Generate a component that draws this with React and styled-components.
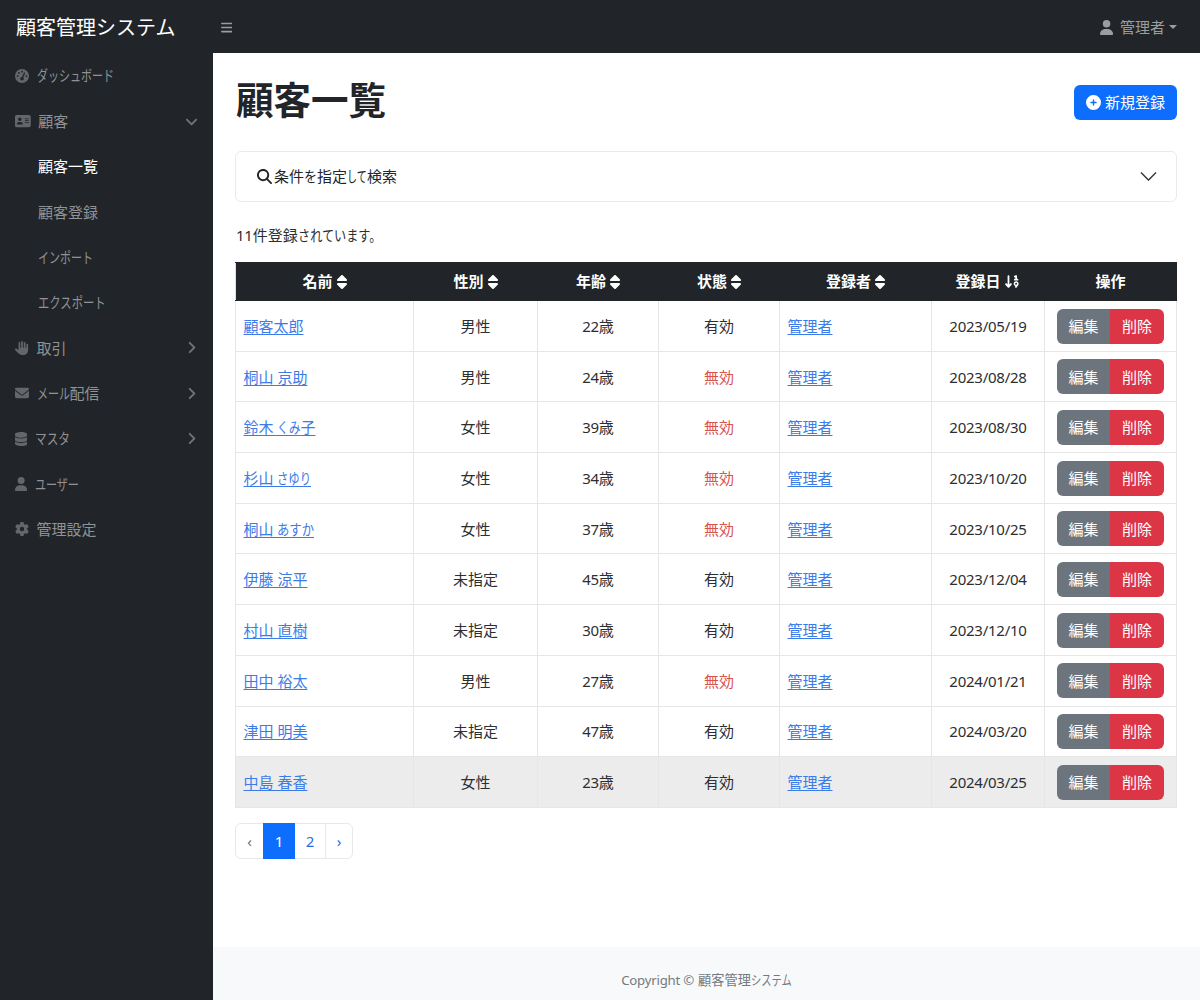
import React from "react";
import styled, { createGlobalStyle } from "styled-components";
import {
  FaAddressCard,
  FaAngleDown,
  FaArrowDown19,
  FaBars,
  FaCirclePlus,
  FaDatabase,
  FaEnvelope,
  FaGaugeHigh,
  FaGear,
  FaHand,
  FaMagnifyingGlass,
  FaSort,
  FaUser,
} from "react-icons/fa6";

const GlobalStyle = createGlobalStyle`
  * {
    box-sizing: border-box;
  }
  body {
    margin: 0;
    color: #2b2f33;
    background-color: #fff;
    font-family: "Noto Sans", "Noto Sans CJK JP", sans-serif;
    font-size: 15px;
    line-height: 1.5;
  }
  svg {
    display: block;
    flex: none;
  }
`;

// ratio is the glyph's own width / height
const IconBox = styled.span`
  flex: none;

  svg {
    height: ${(props) => props.$size}px;
    width: ${(props) => props.$size * props.$ratio}px;
  }
`;

const Page = styled.div`
  width: 1200px;
  height: 1000px;
  display: flex;
  flex-direction: column;
  overflow: hidden;
`;

const TopNav = styled.header`
  height: 53px;
  flex: none;
  display: flex;
  align-items: center;
  padding-top: 1px;
  background-color: #212529;
  color: #9b9d9f;
`;

const Brand = styled.div`
  width: 221px;
  padding: 1px 0 0 16px;
  font-size: 20px;
  line-height: 30px;
  color: #fff;
  white-space: nowrap;
`;

const UserMenu = styled.div`
  margin-left: auto;
  padding-right: 23px;
  display: flex;
  align-items: center;
`;

const UserName = styled.span`
  margin: 0 4px 0 7px;
`;

const Caret = styled.span`
  border: 4.5px solid transparent;
  border-top-color: currentColor;
  border-bottom: 0;
`;

const Body = styled.div`
  flex: 1;
  display: flex;
  min-height: 0;
`;

const SideNav = styled.nav`
  width: 213px;
  flex: none;
  background-color: #212529;
`;

const NavLink = styled.div`
  height: 45.38px;
  display: flex;
  align-items: center;
  padding: 0 15px 0 ${(props) => (props.$nested ? 38 : 15)}px;
  color: ${(props) => (props.$active ? "#fff" : "#909294")};
  white-space: nowrap;
`;

const NavIcon = styled.span`
  margin-right: 7.5px;
  color: #64676a;
`;

const NavArrow = styled.span`
  margin-left: auto;
  color: #707376;
  transform: ${(props) => (props.$collapsed ? "rotate(-90deg)" : "none")};
`;

const Content = styled.div`
  flex: 1;
  display: flex;
  flex-direction: column;
`;

const Main = styled.main`
  flex: 1;
  padding: 24px 23px 0 22px;
`;

const TitleRow = styled.div`
  height: 74px;
  display: flex;
  justify-content: space-between;
  align-items: flex-start;
`;

const Title = styled.h1`
  margin: 0 0 0 1px;
  font-size: 37.5px;
  line-height: 46px;
  font-weight: 600;
  color: #212529;
`;

const NewButton = styled.button`
  width: 103px;
  height: 35px;
  margin-top: 8px;
  padding: 0;
  display: flex;
  align-items: center;
  justify-content: center;
  gap: 4px;
  border: 0;
  border-radius: 6px;
  background-color: #0d6efd;
  color: #fff;
  font: inherit;
`;

const SearchPanel = styled.div`
  height: 51px;
  margin-bottom: 22px;
  padding: 0 18px 0 21px;
  display: flex;
  align-items: center;
  border: 1px solid #e9ebed;
  border-radius: 6px;
  color: #212529;
`;

const SearchLabel = styled.span`
  flex: 1;
  margin-left: 2px;
`;

const Summary = styled.p`
  margin: 0 0 15px 1px;
  height: 23px;
  line-height: 23px;
`;

const Table = styled.table`
  width: 942px;
  table-layout: fixed;
  border-collapse: collapse;
`;

const Th = styled.th`
  width: ${(props) => props.$width}px;
  height: 38px;
  padding: 0;
  background-color: #212529;
  color: #fff;
  font-weight: 700;
  border: 1px solid #212529;
  border-left-color: #dee2e6;
`;

const ThInner = styled.div`
  display: flex;
  align-items: center;
  justify-content: center;
  gap: 4px;
`;

const Tr = styled.tr`
  height: 50.7px;
  background-color: ${(props) => (props.$hover ? "#ececec" : "transparent")};
`;

const Td = styled.td`
  padding: 0.5px 7.5px 0;
  border: 1px solid #e4e6e8;
  text-align: ${(props) => props.$align || "center"};
  color: ${(props) => (props.$danger ? "#d9534f" : "inherit")};
  white-space: nowrap;
`;

const DateText = styled.span`
  letter-spacing: -0.25px;
`;

const Link = styled.a`
  color: #3c7be8;
  text-decoration: underline;
  text-underline-offset: 2px;
`;

const ButtonGroup = styled.div`
  display: flex;
  justify-content: center;
`;

const GroupButton = styled.button`
  width: ${(props) => (props.$danger ? 54 : 53)}px;
  height: 35px;
  padding: 0;
  border: 0;
  border-radius: ${(props) => (props.$danger ? "0 6px 6px 0" : "6px 0 0 6px")};
  background-color: ${(props) => (props.$danger ? "#dc3545" : "#6c757d")};
  color: #fff;
  font: inherit;
`;

const Pagination = styled.div`
  width: 118px;
  height: 36px;
  margin-top: 15px;
  display: flex;
  border: 1px solid #e6e8ea;
  border-radius: 6px;
`;

const PageItem = styled.span`
  width: ${(props) => props.$width}px;
  display: flex;
  align-items: center;
  justify-content: center;
  padding-top: 1px;
  margin: ${(props) => (props.$active ? "-1px 0" : 0)};
  background-color: ${(props) => (props.$active ? "#0d6efd" : "transparent")};
  border-right: ${(props) => (props.$divider ? "1px solid #e6e8ea" : 0)};
  color: ${(props) => (props.$active ? "#fff" : props.$muted ? "#6c757d" : "#2170e8")};
`;

const Footer = styled.footer`
  height: 53px;
  padding-top: 15px;
  display: flex;
  justify-content: center;
  align-items: center;
  background-color: #f8f9fa;
  color: #74797e;
  font-size: 13.2px;
`;

const FooterLatin = styled.span`
  letter-spacing: -0.2px;
  margin-right: 4px;
`;

const KanaBox = styled.span`
  display: inline-block;
  width: ${(props) => props.$width}px;
  white-space: nowrap;
  transform: scaleX(${(props) => props.$scale});
  transform-origin: left center;

  ${Link} & {
    text-decoration: underline;
  }
`;

// condensed kana, as in a UI typeface
function Kana({ children, width, size = 15 }) {
  return (
    <KanaBox $width={width} $scale={width / (children.length * size)}>
      {children}
    </KanaBox>
  );
}

function Icon({ glyph: Glyph, size = 15, ratio = 1 }) {
  return (
    <IconBox $size={size} $ratio={ratio}>
      <Glyph />
    </IconBox>
  );
}

function AccordionChevron() {
  return (
    <svg width="19" height="19" viewBox="0 0 16 16" fill="currentColor" stroke="currentColor" strokeWidth="0.2">
      <path d="M1.646 4.646a.5.5 0 0 1 .708 0L8 10.293l5.646-5.647a.5.5 0 0 1 .708.708l-6 6a.5.5 0 0 1-.708 0l-6-6a.5.5 0 0 1 0-.708z" />
    </svg>
  );
}

const menus = [
  { icon: FaGaugeHigh, label: <Kana width={77}>ダッシュボード</Kana> },
  { icon: FaAddressCard, ratio: 1.125, label: "顧客", arrow: "open" },
  { label: "顧客一覧", nested: true, active: true },
  { label: "顧客登録", nested: true },
  { label: <Kana width={55}>インポート</Kana>, nested: true },
  { label: <Kana width={68}>エクスポート</Kana>, nested: true },
  { icon: FaHand, label: "取引", arrow: "collapsed" },
  {
    icon: FaEnvelope,
    label: (
      <>
        <Kana width={33}>メール</Kana>配信
      </>
    ),
    arrow: "collapsed",
  },
  { icon: FaDatabase, ratio: 0.875, label: <Kana width={35}>マスタ</Kana>, arrow: "collapsed" },
  { icon: FaUser, ratio: 0.875, label: <Kana width={44}>ユーザー</Kana> },
  { icon: FaGear, label: "管理設定" },
];

const sortIcon = <Icon glyph={FaSort} size={16} ratio={0.625} />;

const columns = [
  { label: "名前", width: 178, icon: sortIcon },
  { label: "性別", width: 124, icon: sortIcon },
  { label: "年齢", width: 121, icon: sortIcon },
  { label: "状態", width: 121, icon: sortIcon },
  { label: "登録者", width: 152, icon: sortIcon },
  { label: "登録日", width: 113, icon: <Icon glyph={FaArrowDown19} ratio={1.08} /> },
  { label: "操作", width: 132 },
];

const customers = [
  { name: "顧客太郎", gender: "男性", age: 22, active: true, date: "2023/05/19" },
  { name: "桐山 京助", gender: "男性", age: 24, active: false, date: "2023/08/28" },
  { name: <>鈴木 <Kana width={23}>くみ</Kana>子</>, gender: "女性", age: 39, active: false, date: "2023/08/30" },
  { name: <>杉山 <Kana width={34}>さゆり</Kana></>, gender: "女性", age: 34, active: false, date: "2023/10/20" },
  { name: <>桐山 <Kana width={37}>あすか</Kana></>, gender: "女性", age: 37, active: false, date: "2023/10/25" },
  { name: "伊藤 涼平", gender: "未指定", age: 45, active: true, date: "2023/12/04" },
  { name: "村山 直樹", gender: "未指定", age: 30, active: true, date: "2023/12/10" },
  { name: "田中 裕太", gender: "男性", age: 27, active: false, date: "2024/01/21" },
  { name: "津田 明美", gender: "未指定", age: 47, active: true, date: "2024/03/20" },
  { name: "中島 春香", gender: "女性", age: 23, active: true, date: "2024/03/25", hover: true },
];

function CustomerTable() {
  return (
    <Table>
      <thead>
        <tr>
          {columns.map((col) => (
            <Th key={col.label} $width={col.width}>
              <ThInner>
                {col.label}
                {col.icon}
              </ThInner>
            </Th>
          ))}
        </tr>
      </thead>
      <tbody>
        {customers.map((c) => (
          <Tr key={c.date} $hover={c.hover}>
            <Td $align="left">
              <Link>{c.name}</Link>
            </Td>
            <Td>{c.gender}</Td>
            <Td>
              <DateText>{c.age}</DateText>歳
            </Td>
            <Td $danger={!c.active}>{c.active ? "有効" : "無効"}</Td>
            <Td $align="left">
              <Link>管理者</Link>
            </Td>
            <Td>
              <DateText>{c.date}</DateText>
            </Td>
            <Td>
              <ButtonGroup>
                <GroupButton>編集</GroupButton>
                <GroupButton $danger>削除</GroupButton>
              </ButtonGroup>
            </Td>
          </Tr>
        ))}
      </tbody>
    </Table>
  );
}

function App() {
  return (
    <Page>
      <GlobalStyle />
      <TopNav>
        <Brand>
          顧客管理<Kana width={80} size={20}>システム</Kana>
        </Brand>
        <Icon glyph={FaBars} size={13} ratio={0.875} />
        <UserMenu>
          <Icon glyph={FaUser} ratio={0.875} />
          <UserName>管理者</UserName>
          <Caret />
        </UserMenu>
      </TopNav>
      <Body>
        <SideNav>
          {menus.map((menu, i) => (
            <NavLink key={i} $nested={menu.nested} $active={menu.active}>
              {menu.icon && (
                <NavIcon>
                  <Icon glyph={menu.icon} size={14} ratio={menu.ratio} />
                </NavIcon>
              )}
              <span>{menu.label}</span>
              {menu.arrow && (
                <NavArrow $collapsed={menu.arrow === "collapsed"}>
                  <Icon glyph={FaAngleDown} ratio={0.875} />
                </NavArrow>
              )}
            </NavLink>
          ))}
        </SideNav>
        <Content>
          <Main>
            <TitleRow>
              <Title>顧客一覧</Title>
              <NewButton>
                <Icon glyph={FaCirclePlus} />
                新規登録
              </NewButton>
            </TitleRow>
            <SearchPanel>
              <Icon glyph={FaMagnifyingGlass} />
              <SearchLabel>
                条件<Kana width={13}>を</Kana>指定<Kana width={20}>して</Kana>検索
              </SearchLabel>
              <AccordionChevron />
            </SearchPanel>
            <Summary>
              <DateText>11</DateText>件登録<Kana width={85}>されています。</Kana>
            </Summary>
            <CustomerTable />
            <Pagination>
              <PageItem $width={27} $muted>‹</PageItem>
              <PageItem $width={32} $active>1</PageItem>
              <PageItem $width={31} $divider>2</PageItem>
              <PageItem $width={26}>›</PageItem>
            </Pagination>
          </Main>
          <Footer>
            <FooterLatin>Copyright ©</FooterLatin>
            顧客管理<Kana width={41} size={13.2}>システム</Kana>
          </Footer>
        </Content>
      </Body>
    </Page>
  );
}

export default App;
